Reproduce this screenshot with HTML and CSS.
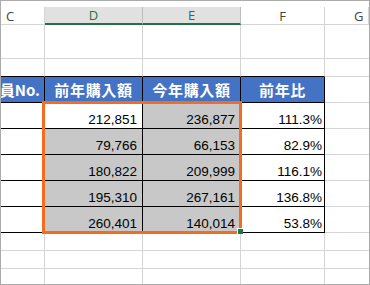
FILE: index.html
```html
<!DOCTYPE html>
<html lang="ja">
<head>
    <meta charset="UTF-8">
    <title>前年比</title>
    <link rel="stylesheet" href="styles.css">
</head>
<body>
    <div class="sheet">
        <div class="grid">
            <!-- column headers -->
            <div class="col-head c-left">C</div>
            <div class="col-head selected">D</div>
            <div class="col-head selected">E</div>
            <div class="col-head">F</div>
            <div class="col-head g-left last">G</div>

            <!-- empty rows above the table -->
            <div class="cell"></div>
            <div class="cell"></div>
            <div class="cell"></div>
            <div class="cell"></div>
            <div class="cell last"></div>

            <div class="cell above"></div>
            <div class="cell above"></div>
            <div class="cell above"></div>
            <div class="cell above"></div>
            <div class="cell last"></div>

            <!-- table header -->
            <div class="cell th clip">員No.</div>
            <div class="cell th">前年購入額</div>
            <div class="cell th">今年購入額</div>
            <div class="cell th">前年比</div>
            <div class="cell last"></div>

            <!-- table rows -->
            <div class="cell td"></div>
            <div class="cell td num">212,851</div>
            <div class="cell td num shade">236,877</div>
            <div class="cell td pct">111.3%</div>
            <div class="cell last"></div>

            <div class="cell td"></div>
            <div class="cell td num shade">79,766</div>
            <div class="cell td num shade">66,153</div>
            <div class="cell td pct">82.9%</div>
            <div class="cell last"></div>

            <div class="cell td"></div>
            <div class="cell td num shade">180,822</div>
            <div class="cell td num shade">209,999</div>
            <div class="cell td pct">116.1%</div>
            <div class="cell last"></div>

            <div class="cell td"></div>
            <div class="cell td num shade">195,310</div>
            <div class="cell td num shade">267,161</div>
            <div class="cell td pct">136.8%</div>
            <div class="cell last"></div>

            <div class="cell td"></div>
            <div class="cell td num shade">260,401</div>
            <div class="cell td num shade">140,014</div>
            <div class="cell td pct">53.8%</div>
            <div class="cell last"></div>

            <!-- empty rows below -->
            <div class="cell"></div>
            <div class="cell"></div>
            <div class="cell"></div>
            <div class="cell"></div>
            <div class="cell last"></div>

            <div class="cell"></div>
            <div class="cell"></div>
            <div class="cell"></div>
            <div class="cell"></div>
            <div class="cell last"></div>

            <div class="cell bottom"></div>
            <div class="cell bottom"></div>
            <div class="cell bottom"></div>
            <div class="cell bottom"></div>
            <div class="cell bottom last"></div>

            <!-- highlighted range D:E -->
            <div class="range"></div>
        </div>
    </div>
</body>
</html>
```

FILE: styles.css
```css
* {
    box-sizing: border-box;
}

body {
    margin: 0;
    background-color: #fff;
}

.sheet {
    width: 370px;
    height: 285px;
    border: 1px solid #ababab;
    padding-top: 6px;
    overflow: hidden;
}

.grid {
    display: grid;
    grid-template-columns: 44px 98px 98px 84px 1fr;
    grid-template-rows: 18px 34px 18px 26px 26px 26px 26px 26px 26px 18px 18px 1fr;
    height: 100%;
    position: relative;
}

.col-head {
    display: flex;
    align-items: center;
    justify-content: center;
    font-family: "Open Sans", "Liberation Sans", sans-serif;
    font-size: 13px;
    color: #444;
    background-color: #fff;
    border-right: 1px solid #d4d4d4;
    border-bottom: 1px solid #d4d4d4;
}

.col-head.selected {
    background-color: #e1e1e1;
    color: #217346;
    border-right-color: #bdbdbd;
    border-bottom: 2px solid #217346;
}

.c-left {
    justify-content: flex-start;
    padding-left: 5px;
}

.g-left {
    justify-content: flex-start;
    padding-left: 29px;
}

.cell {
    border-right: 1px solid #d4d4d4;
    border-bottom: 1px solid #d4d4d4;
}

.cell.last {
    border-right: none;
}

.cell.bottom {
    border-bottom: none;
}

.cell.above {
    border-bottom-color: #000;
}

.th {
    display: flex;
    align-items: center;
    justify-content: center;
    background-color: #4472c4;
    color: #fff;
    font-family: "Noto Sans CJK JP", sans-serif;
    font-weight: bold;
    font-size: 15px;
    letter-spacing: 0.7px;
    border-right-color: #000;
    border-bottom-color: #000;
    white-space: nowrap;
}

.th.clip {
    justify-content: flex-end;
    padding-right: 4px;
    letter-spacing: 0;
}

.td {
    display: flex;
    align-items: flex-end;
    justify-content: flex-end;
    font-family: "Liberation Sans", Arial, sans-serif;
    font-size: 13.5px;
    line-height: 15px;
    color: #000;
    padding-bottom: 1px;
    border-right-color: #000;
    border-bottom-color: #000;
}

.num {
    padding-right: 5px;
}

.pct {
    padding-right: 2px;
}

.shade {
    background-color: #c8c8c8;
}

/* overlay on D:E data rows, sits over the cells */
.range {
    grid-column: 2 / 4;
    grid-row: 5 / 10;
    position: absolute;
    top: -2px;
    left: -3px;
    right: -1px;
    bottom: -1px;
    border: 3px solid #f26d21;
}

.range::after {
    content: "";
    position: absolute;
    right: -4px;
    bottom: -3px;
    width: 5px;
    height: 5px;
    background-color: #217346;
    border-top: 1px solid #fff;
    border-left: 1px solid #fff;
}
```
